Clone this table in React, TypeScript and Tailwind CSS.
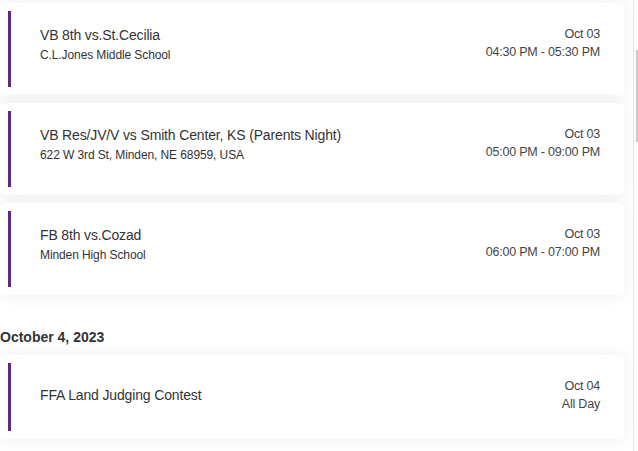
import React from "react";

type EventItem = {
  title: string;
  place?: string;
  date: string;
  time: string;
};

const oct3: EventItem[] = [
  {
    title: "VB 8th vs.St.Cecilia",
    place: "C.L.Jones Middle School",
    date: "Oct 03",
    time: "04:30 PM - 05:30 PM",
  },
  {
    title: "VB Res/JV/V vs Smith Center, KS (Parents Night)",
    place: "622 W 3rd St, Minden, NE 68959, USA",
    date: "Oct 03",
    time: "05:00 PM - 09:00 PM",
  },
  {
    title: "FB 8th vs.Cozad",
    place: "Minden High School",
    date: "Oct 03",
    time: "06:00 PM - 07:00 PM",
  },
];

function EventCard({ ev }: { ev: EventItem }) {
  const hasPlace = !!ev.place;
  return (
    <div
      className={`flex bg-white rounded-[6px] shadow-[0_0_18px_rgba(0,0,0,0.07)] ${
        hasPlace ? "h-[92px]" : "h-[84px]"
      }`}
    >
      <div className="ml-[8px] my-[8px] w-[3px] bg-[#5b2a7e]"></div>
      <div
        className={`flex flex-1 pl-[29px] pr-[24px] ${
          hasPlace ? "pt-[22px] items-start" : "items-center pb-[4px]"
        }`}
      >
        <div className="flex-1 min-w-0">
          <div className="text-[14px] leading-[20px] text-[#333] tracking-[-0.15px]">
            {ev.title}
          </div>
          {hasPlace && (
            <div className="text-[12px] leading-[20px] text-[#333] tracking-[-0.1px]">
              {ev.place}
            </div>
          )}
        </div>
        <div className="text-right text-[12.5px] leading-[18px] text-[#444] tracking-[-0.2px]">
          <div>{ev.date}</div>
          <div>{ev.time}</div>
        </div>
      </div>
    </div>
  );
}

export default function App() {
  return (
    <div
      className="w-[638px] h-[451px] overflow-hidden bg-white flex"
      style={{ fontFamily: "'Liberation Sans', Arial, sans-serif" }}
    >
      <div className="w-[624px] pt-[3px] flex flex-col">
        <div className="flex flex-col gap-[8px]">
          {oct3.map((ev, i) => (
            <EventCard key={i} ev={ev} />
          ))}
        </div>
        <div className="mt-[33px] mb-[8px] text-[14px] leading-[19px] font-bold text-[#333]">
          October 4, 2023
        </div>
        <EventCard
          ev={{ title: "FFA Land Judging Contest", date: "Oct 04", time: "All Day" }}
        />
      </div>
      <div className="ml-[9px] flex-1 border-l border-[#e5e5e5] relative">
        <div className="absolute right-0 top-[50px] h-[92px] w-[2px] bg-[#c8c8c8]"></div>
      </div>
    </div>
  );
}
